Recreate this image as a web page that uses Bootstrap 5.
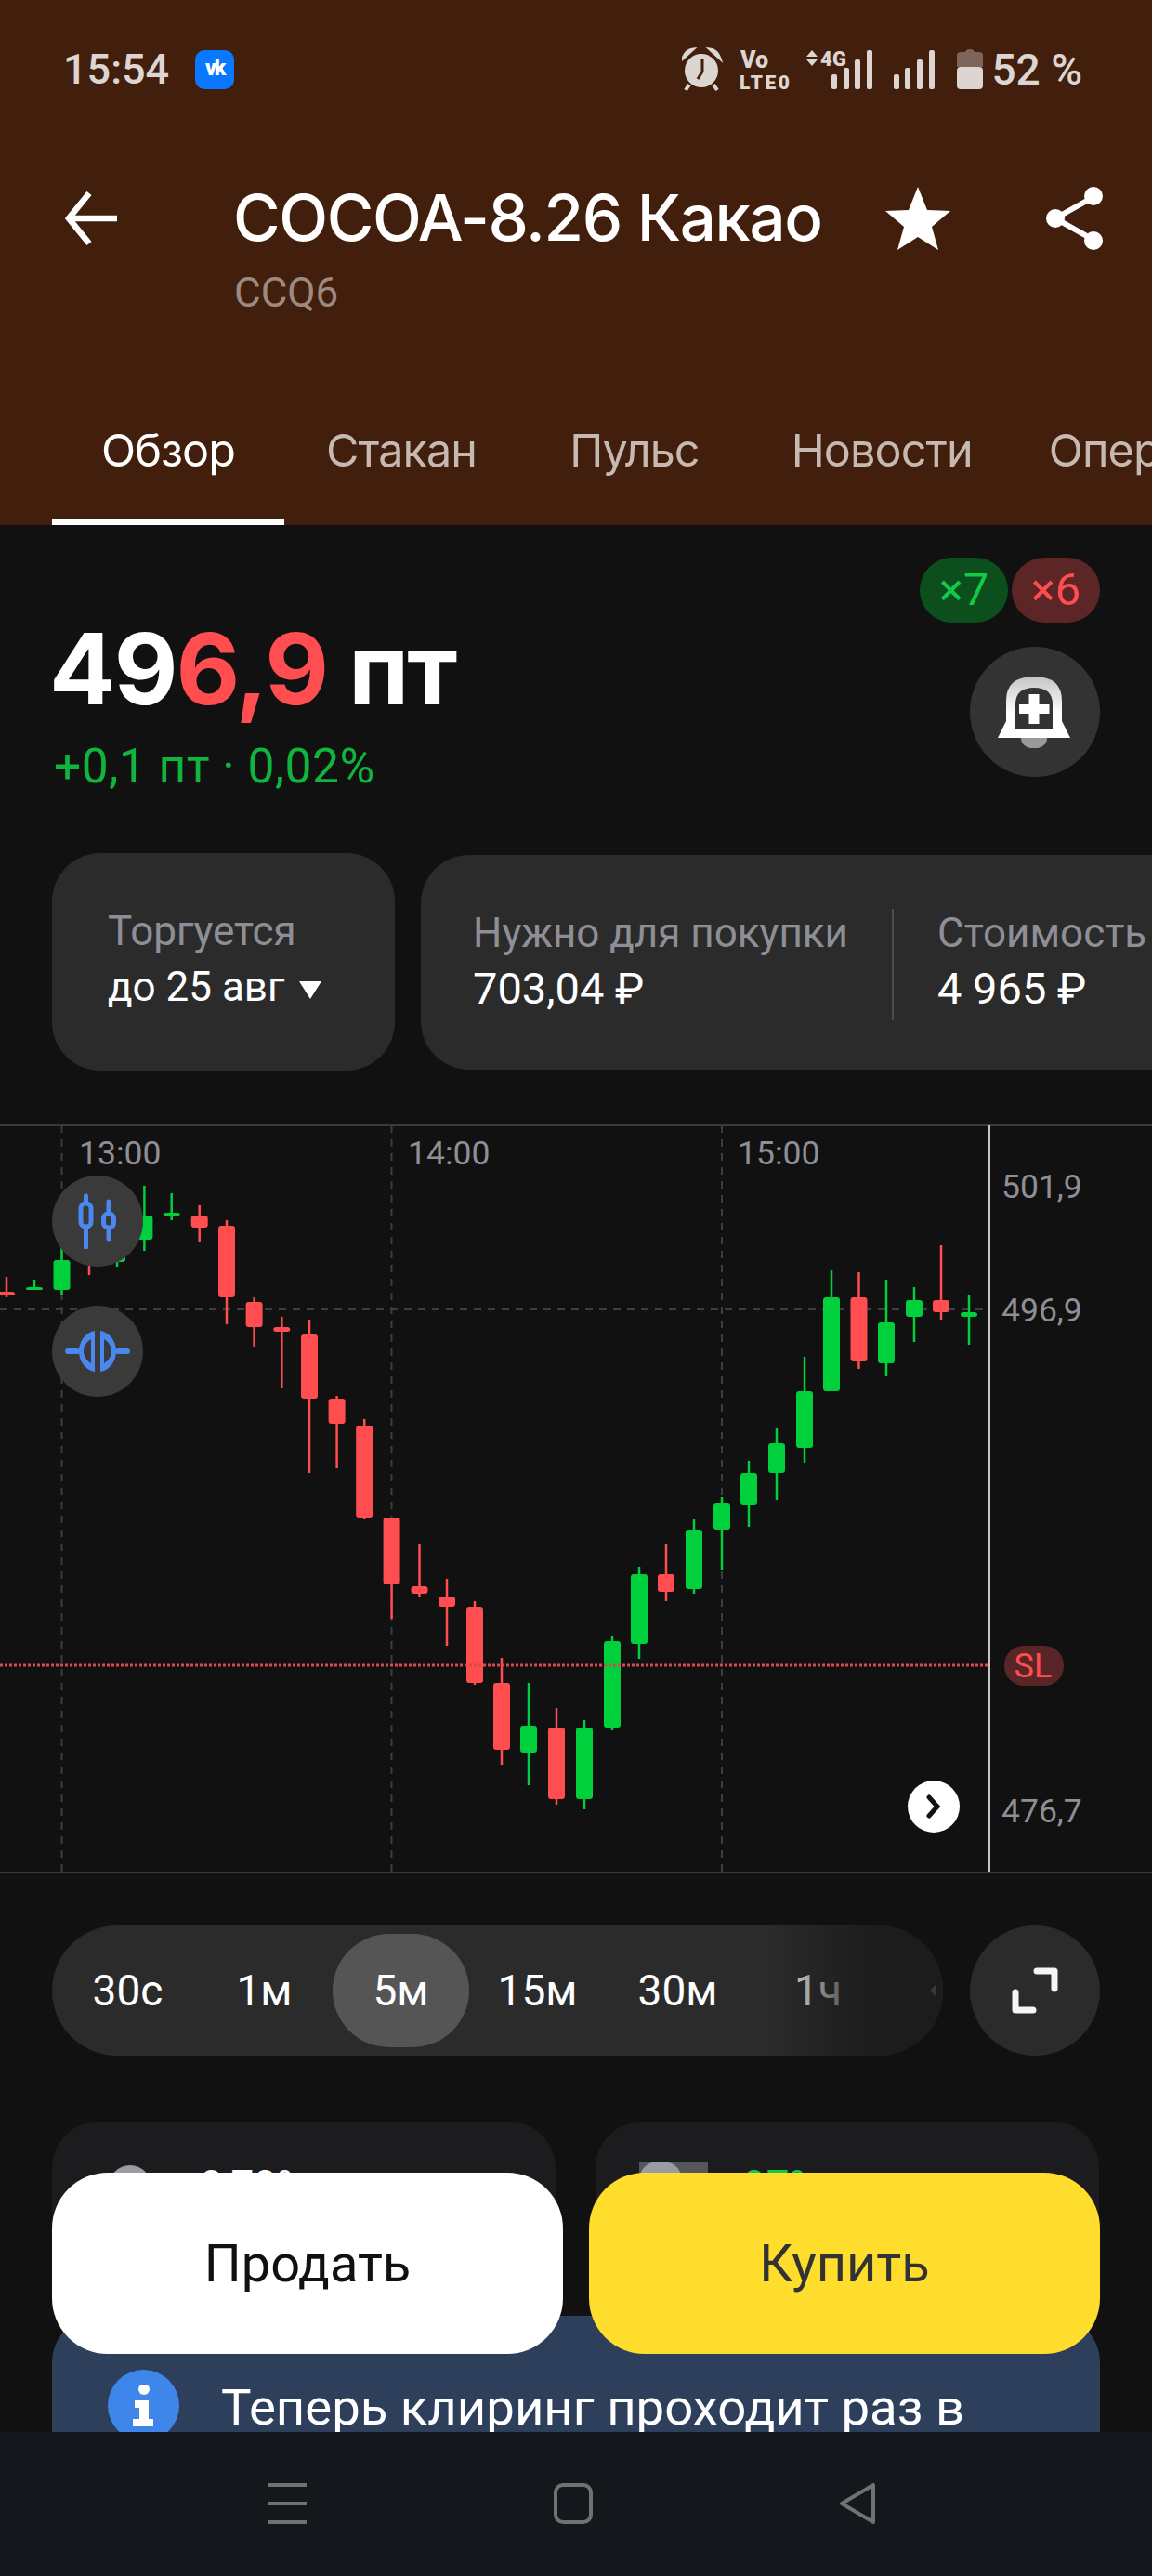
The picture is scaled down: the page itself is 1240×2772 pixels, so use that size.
<!DOCTYPE html>
<html lang="ru">
<head>
<meta charset="UTF-8">
<title>COCOA-8.26</title>
<link href="https://cdn.jsdelivr.net/npm/bootstrap@5.3.3/dist/css/bootstrap.min.css" rel="stylesheet">
<style>
  body { margin: 0; background: #111; font-family: Roboto, "Liberation Sans", sans-serif; }
  .phone { width: 1240px; height: 2772px; overflow: hidden; background: #111; color: #fff; }

  .top-head { background: #421e0c; height: 565px; }
  .status-row { height: 130px; padding: 20px 75px 0 68px; color: #dcd5d1; }
  .clock { font-size: 45px; font-weight: 500; }
  .vk-box { width: 42px; height: 42px; border-radius: 10px; background: #0a77ff; margin-left: 28px; font-size: 23px; font-weight: 900; color: #fff; line-height: 40px; text-align: center; letter-spacing: -2px; }
  .batt-pct { font-size: 46px; font-weight: 500; margin-left: 6px; }
  .title-row { height: 128px; margin-top: 41px; padding: 0 52px 0 70px; }
  .instr-name { font-family: Inter, Roboto, sans-serif; font-size: 69px; font-weight: 500; margin-left: 125px; letter-spacing: -1.4px; white-space: nowrap; }
  .ticker-sub { font-size: 44px; color: #9c8a80; margin-left: 252px; line-height: 50px; margin-top: -9px; }
  .tab-row { margin-top: 100px; height: 125px; padding-left: 56px; white-space: nowrap; overflow: hidden; }
  .tab-item { font-family: Inter, Roboto, sans-serif; font-size: 48.500px; color: #c5b9b2; height: 125px; line-height: 90px; padding: 0 54px; letter-spacing: -.9px; flex-shrink: 0; }
  .tab-item.on { color: #fff; border-bottom: 7px solid #fff; }

  .hero { padding: 35px 56px 0; height: 353px; }
  .pill-x { width: 95px; height: 70px; border-radius: 35px; font-size: 49px; line-height: 70px; text-align: center; }
  .pill-x.up { background: #0c4f1d; color: #14c94a; }
  .pill-x.dn { background: #5c2526; color: #ff4d50; }
  .bell-btn { width: 140px; height: 140px; border-radius: 50%; background: #333; margin-top: 26px; }
  .price-big { font-family: Inter, Roboto, sans-serif; font-size: 106px; font-weight: 700; line-height: 120px; margin-top: 60px; margin-left: -3px; letter-spacing: -2px; }
  .price-big span { color: #ff4d50; }
  .price-chg { font-size: 51.500px; color: #0fb53c; margin-top: 19px; line-height: 52px; margin-left: 2px; letter-spacing: .5px; }

  .info-row { gap: 28px; padding-left: 56px; height: 234px; overflow: hidden; }
  .info-box { background: #2b2b2b; border-radius: 52px; height: 234px; width: 369px; flex-shrink: 0; padding: 54px 60px; }
  .info-box.wide { padding: 54px 0 0 56px; height: 231px; width: 900px; margin-top: 2px; }
  .info-lbl { font-size: 44px; color: #8e8f96; line-height: 60px; white-space: nowrap; }
  .info-val { font-size: 44px; color: #fff; line-height: 60px; white-space: nowrap; }
  .info-val.num { font-size: 47px; }
  .info-sep { width: 2px; height: 120px; margin: 4px 47px 0; background: #4d4d50; }

  .chart-wrap { margin-top: 58px; height: 806px; position: relative; }
  .chart-wrap svg.plot { display: block; }
  .chart-btn { position: absolute; left: 56px; width: 98px; height: 98px; border-radius: 50%; background: #3a3a3a; }
  .go-end { position: absolute; left: 977px; top: 706px; width: 56px; height: 56px; border-radius: 50%; background: #fff; }

  .range-row { margin-top: 56px; padding: 0 56px; gap: 29px; }
  .range-bar { position: relative; width: 959px; height: 140px; border-radius: 70px; background: #2b2b2b; overflow: hidden; padding: 0 8px; }
  .range-bar::after { content: ""; position: absolute; right: 0; top: 0; bottom: 0; width: 190px; background: linear-gradient(to right, rgba(28,28,28,0), #1c1c1c 60%); }
  .range-opt { font-size: 46px; width: 147px; height: 122px; line-height: 122px; text-align: center; border-radius: 61px; color: #fff; flex-shrink: 0; }
  .range-opt.on { background: #555; }
  .range-opt.shift { margin-left: 4px; }
  .more-tri { position: absolute; right: 8px; top: 64px; z-index: 1; }
  .full-btn { width: 140px; height: 140px; border-radius: 50%; background: #2b2b2b; }

  .peek-row { margin-top: 71px; padding: 0 56px; gap: 43px; height: 209px; }
  .peek-box { flex: 0 0 542px; background: #1c1c1e; border-radius: 50px 50px 0 0; padding: 47px 0 0 61px; font-size: 44px; line-height: 44px; height: 180px; }
  .peek-box.right-box { padding-left: 47px; }
  .peek-ico { width: 46px; height: 46px; border-radius: 50%; background: #9a9ca3; margin-right: 52px; }
  .peek-ico.sq { width: 74px; height: 56px; border-radius: 0; background: #55565a; margin-right: 38px; margin-top: -4px; position: relative; }
  .peek-ico.sq::before { content: ""; position: absolute; left: 0; top: 0; width: 46px; height: 56px; border-radius: 20px 20px 0 0; background: #9a9ca3; }
  .green-txt { color: #14c94a; }

  .notice { margin: 0 56px; height: 200px; background: #2e3f5c; border-radius: 50px 50px 0 0; padding: 58px 60px 0; font-size: 54.500px; white-space: nowrap; }
  .info-dot { width: 77px; height: 77px; border-radius: 50%; background: #3f86ea; margin-right: 45px; flex-shrink: 0; }

  .deal-row { position: absolute; left: 56px; right: 56px; top: 2338px; gap: 28px; }
  .deal-btn { flex: 1; height: 195px; border: 0; border-radius: 60px; font-family: Roboto, sans-serif; font-size: 56px; }
  .deal-btn.sell { background: #fff; color: #111; }
  .deal-btn.buy { background: #ffdd2d; color: #333; }
  .sys-nav { position: absolute; left: 0; right: 0; top: 2617px; height: 155px; background: #15171c; }
  .sys-nav svg { position: absolute; top: 55px; }
</style>
</head>
<body>
<div class="phone position-relative">

  <div class="top-head">
    <div class="status-row d-flex align-items-center">
      <span class="clock">15:54</span>
      <span class="vk-box">vk</span>
      <svg class="ms-auto" width="327" height="60" viewBox="735 44 327 60">
        <g fill="#dcd5d1">
          <circle cx="756" cy="75" r="18"/>
          <path d="M736 62 q3-9 11-10 l-11 10z M776 62 q-3-9-11-10 l11 10z" stroke="#dcd5d1" stroke-width="3"/>
          <path d="M743 90l-4 6M769 90l4 6" stroke="#dcd5d1" stroke-width="4"/>
          <text x="798" y="72" font-family="Roboto" font-weight="900" font-size="25">Vo</text>
          <text x="797" y="95" font-family="Roboto" font-weight="900" font-size="21" textLength="54">LTE0</text>
          <path d="M875 53l6 7h-12zM875 70l6-7h-12z"/>
          <text x="884" y="70" font-family="Roboto" font-weight="900" font-size="22" textLength="28">4G</text>
          <rect x="896" y="79" width="6" height="16" rx="2"/><rect x="909" y="72" width="6" height="23" rx="2"/><rect x="921" y="63" width="6" height="32" rx="2"/><rect x="934" y="53" width="6" height="42" rx="2"/>
          <rect x="963" y="79" width="6" height="16" rx="2"/><rect x="975" y="72" width="6" height="23" rx="2"/><rect x="988" y="63" width="6" height="32" rx="2"/><rect x="1001" y="53" width="6" height="42" rx="2"/>
          <rect x="1031" y="71" width="28" height="24" rx="4"/>
        </g>
        <path d="M757 62v14l-5 8" fill="none" stroke="#421e0c" stroke-width="3"/>
        <path d="M1031 71v-12q0-4 4-4h5q1-3 5-3t5 3h5q4 0 4 4v12z" fill="#7d6659"/>
      </svg>
      <span class="batt-pct">52 %</span>
    </div>

    <div class="title-row d-flex align-items-center">
      <svg width="56" height="58" viewBox="0 0 56 58"><path d="M26 2L4 29l22 27M4 29h52" fill="none" stroke="#fff" stroke-width="6.500"/></svg>
      <span class="instr-name">COCOA-8.26 Какао</span>
      <svg class="ms-auto" width="70" height="68" viewBox="0 0 70 68"><path d="M35 0l10 25 25 1-20 17 7 25-22-14-22 14 7-25L0 26l25-1z" fill="#fff"/></svg>
      <svg style="margin-left:102px" width="63" height="70" viewBox="0 0 63 70" fill="none"><path d="M52 12L11 35l41 23" stroke="#fff" stroke-width="6"/><circle cx="52" cy="11" r="10" fill="#fff"/><circle cx="11" cy="35" r="10" fill="#fff"/><circle cx="52" cy="59" r="10" fill="#fff"/></svg>
    </div>
    <div class="ticker-sub">CCQ6</div>

    <div class="tab-row d-flex">
      <div class="tab-item on" style="padding-left:53px;padding-right:53px">Обзор</div>
      <div class="tab-item" style="padding-left:45px">Стакан</div>
      <div class="tab-item" style="padding-left:46px">Пульс</div>
      <div class="tab-item" style="padding-left:45px">Новости</div>
      <div class="tab-item" style="padding-left:28px">Операции</div>
    </div>
  </div>

  <div class="hero d-flex justify-content-between">
    <div>
      <div class="price-big">49<span>6,9</span> пт</div>
      <div class="price-chg">+0,1 пт · 0,02%</div>
    </div>
    <div class="d-flex flex-column align-items-end">
      <div class="d-flex gap-1">
        <div class="pill-x up">×7</div>
        <div class="pill-x dn">×6</div>
      </div>
      <div class="bell-btn d-flex align-items-center justify-content-center">
        <svg width="80" height="80" viewBox="0 0 80 80">
          <defs><linearGradient id="bellFill" x1="0" y1="0" x2="0" y2="1"><stop offset="0" stop-color="#c4c4c4"/><stop offset=".6" stop-color="#fff"/></linearGradient></defs>
          <rect x="25" y="58" width="28" height="21" rx="12" fill="#999"/>
          <path d="M0 68L9 50V28Q9 2 39 2T69 28V50L78 68z" fill="url(#bellFill)"/>
          <path d="M19 58V32Q19 14 39 14T59 32V58z" fill="#333"/>
          <path d="M33.500 21h11v11h11v10h-11v11h-11v-11h-10.500v-10h10.500z" fill="#fff"/>
        </svg>
      </div>
    </div>
  </div>

  <div class="info-row d-flex">
    <div class="info-box">
      <div class="info-lbl">Торгуется</div>
      <div class="info-val">до 25 авг <svg class="ms-1" width="26" height="24" viewBox="0 0 26 24"><path d="M1 3h24L13 22z" fill="#fff"/></svg></div>
    </div>
    <div class="info-box wide d-flex align-items-start">
      <div>
        <div class="info-lbl">Нужно для покупки</div>
        <div class="info-val num">703,04 ₽</div>
      </div>
      <div class="info-sep"></div>
      <div>
        <div class="info-lbl">Стоимость</div>
        <div class="info-val num">4 965 ₽</div>
      </div>
    </div>
  </div>

  <div class="chart-wrap">
    <svg class="plot" id="plot" width="1240" height="806" viewBox="0 1210 1240 806">
      <g font-family="Roboto, sans-serif" font-size="35.500" fill="#8e8f96">
        <text x="85" y="1253">13:00</text>
        <text x="439" y="1253">14:00</text>
        <text x="794" y="1253">15:00</text>
        <text x="1078" y="1289">501,9</text>
        <text x="1078" y="1422">496,9</text>
        <text x="1078" y="1961">476,7</text>
      </g>
    </svg>
    <div class="chart-btn d-flex align-items-center justify-content-center" style="top:55px">
      <svg width="42" height="60" viewBox="0 0 42 60" fill="none" stroke="#4a88f0" stroke-width="5" stroke-linecap="round"><path d="M8.500 3v55M33 9v40"/><rect x="3" y="11" width="11" height="25" rx="5" fill="#3a3a3a"/><rect x="27.500" y="22" width="11" height="15" rx="5" fill="#3a3a3a"/></svg>
    </div>
    <div class="chart-btn d-flex align-items-center justify-content-center" style="top:195px">
      <svg width="70" height="46" viewBox="0 0 70 46" fill="#4a88f0"><rect y="20" width="16" height="6" rx="3"/><rect x="54" y="20" width="16" height="6" rx="3"/><path d="M32 1v44C21 43 15 33 15 23S21 3 32 1z"/><path d="M38 1v44C49 43 55 33 55 23S49 3 38 1z"/><path d="M28 10v26C23 33 20 28 20 23S23 13 28 10zM42 10v26C47 33 50 28 50 23S47 13 42 10z" fill="#3a3a3a"/></svg>
    </div>
    <div class="go-end d-flex align-items-center justify-content-center">
      <svg width="20" height="26" viewBox="0 0 20 26"><path d="M5 3l9 10-9 10" fill="none" stroke="#111" stroke-width="5" stroke-linecap="round"/></svg>
    </div>
  </div>

  <div class="range-row d-flex">
    <div class="range-bar d-flex align-items-center">
      <div class="range-opt">30с</div>
      <div class="range-opt">1м</div>
      <div class="range-opt on">5м</div>
      <div class="range-opt">15м</div>
      <div class="range-opt shift">30м</div>
      <div class="range-opt shift">1ч</div>
      <svg class="more-tri" width="6" height="12" viewBox="0 0 6 12"><path d="M6 0v12L0 6z" fill="#3a3a3a"/></svg>
    </div>
    <div class="full-btn d-flex align-items-center justify-content-center">
      <svg width="50" height="50" viewBox="0 0 50 50" fill="none" stroke="#f5f5f5" stroke-width="7" stroke-linecap="round" stroke-linejoin="round"><path d="M27 4h19v19M4 27v19h19"/></svg>
    </div>
  </div>

  <div class="peek-row d-flex">
    <div class="peek-box d-flex">
      <div class="peek-ico"></div><span>0,78%</span>
    </div>
    <div class="peek-box right-box d-flex">
      <div class="peek-ico sq"></div><span class="green-txt">97%</span>
    </div>
  </div>

  <div class="notice d-flex align-items-start">
    <div class="info-dot d-flex align-items-center justify-content-center">
      <svg width="24" height="46" viewBox="0 0 24 46" fill="#fff"><circle cx="12" cy="5" r="6"/><path d="M2 17h15v20h5v8H0v-8h7V25H2z"/></svg>
    </div>
    <span>Теперь клиринг проходит раз в</span>
  </div>

  <div class="deal-row d-flex">
    <button class="deal-btn sell">Продать</button>
    <button class="deal-btn buy">Купить</button>
  </div>

  <div class="sys-nav">
    <svg style="left:288px" width="42" height="44" viewBox="0 0 42 44" fill="#6f7175"><rect width="42" height="4"/><rect y="20" width="42" height="4"/><rect y="40" width="42" height="4"/></svg>
    <svg style="left:596px" width="42" height="44" viewBox="0 0 42 44"><rect x="2" y="2" width="38" height="40" rx="8" fill="none" stroke="#6f7175" stroke-width="4"/></svg>
    <svg style="left:903px" width="40" height="44" viewBox="0 0 40 44"><path d="M37 2v40L3 22z" fill="none" stroke="#6f7175" stroke-width="4" stroke-linejoin="round"/></svg>
  </div>
</div>

<script src="https://cdn.jsdelivr.net/npm/bootstrap@5.3.3/dist/js/bootstrap.bundle.min.js"></script>
<script>
// x, wick top, wick bottom, body top, body bottom, colour
const candles = [
  [7,1374,1396,1390,1394,"r"],[37,1377,1388,1385,1388,"g"],[66.5,1343,1393,1356,1388,"g"],
  [96,1320,1372,1330,1350,"r"],[126,1330,1363,1345,1358,"g"],[155.4,1276,1346,1308,1334,"g"],
  [184.7,1284,1313,1305,1308,"g"],[214.7,1297,1337,1308,1321,"r"],[244,1313,1425,1319,1396,"r"],
  [273.6,1396,1449,1401,1428,"r"],[303.3,1417,1494,1428,1433,"r"],[333,1420,1585,1436,1505,"r"],
  [362.6,1502,1580,1505,1532,"r"],[392.2,1527,1635,1534,1633,"r"],[421.6,1633,1742,1633,1705,"r"],
  [451.5,1662,1718,1707,1715,"r"],[481,1699,1771,1718,1729,"r"],[511,1723,1813,1729,1811,"r"],
  [540,1784,1899,1811,1883,"r"],[569,1811,1921,1857,1886,"g"],[599,1838,1942,1859,1936,"r"],
  [629,1851,1947,1859,1936,"g"],[659,1760,1862,1766,1859,"g"],[688,1686,1785,1694,1769,"g"],
  [717,1662,1723,1694,1713,"r"],[747,1635,1715,1646,1710,"g"],[777,1611,1689,1617,1646,"g"],
  [806,1572,1643,1585,1619,"g"],[836,1537,1614,1553,1585,"g"],[866,1460,1574,1497,1558,"g"],
  [895,1367,1497,1396,1497,"g"],[924.5,1369,1473,1396,1465,"r"],[954,1377,1481,1423,1467,"g"],
  [984,1385,1444,1399,1417,"g"],[1013,1340,1420,1399,1412,"r"],[1043,1393,1447,1412,1417,"g"]
];
const colors = { r: "#ff4d50", g: "#00d03c" };
let grid = "";
[66.5, 421.5, 777].forEach(x => {
  grid += `<line x1="${x}" x2="${x}" y1="1211" y2="2014" stroke="#3d3d3d" stroke-width="2" stroke-dasharray="8 7"/>`;
});
grid += `<line x1="0" x2="1065" y1="1409" y2="1409" stroke="#3d3d3d" stroke-width="2" stroke-dasharray="8 7"/>`;
let marks = "";
candles.forEach(c => {
  const fill = colors[c[5]];
  marks += `<rect x="${c[0] - 1.25}" y="${c[1]}" width="2.5" height="${c[2] - c[1]}" fill="${fill}"/>`;
  marks += `<rect x="${c[0] - 9}" y="${c[3]}" width="18" height="${c[4] - c[3]}" rx="3" fill="${fill}"/>`;
});
let lines = `<rect y="1209" width="1240" height="3" fill="#3a3a3a"/><rect y="2014" width="1240" height="3" fill="#3a3a3a"/>`;
lines += `<rect x="1064" y="1211" width="2" height="803" fill="#c4c4c4"/>`;
lines += `<line x1="0" x2="1065" y1="1792" y2="1792" stroke="#d94a4c" stroke-width="3" stroke-dasharray="3 2"/>`;
lines += `<rect x="1081" y="1771" width="64" height="43" rx="21" fill="#5a2526"/>`;
lines += `<text x="1112" y="1805" text-anchor="middle" font-family="Roboto, sans-serif" font-size="36" fill="#ff4d50">SL</text>`;
const plot = document.getElementById("plot");
plot.insertAdjacentHTML("afterbegin", grid + marks + lines);
</script>
</body>
</html>
